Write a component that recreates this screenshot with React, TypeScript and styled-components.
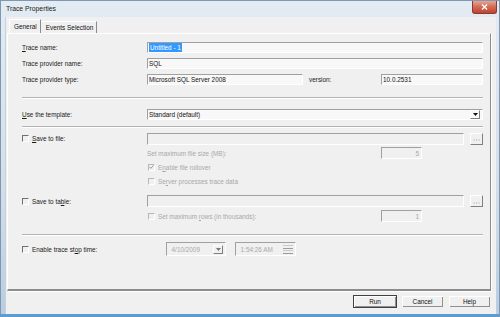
import React from 'react'
import styled, { createGlobalStyle } from 'styled-components'

const DISABLED = '#a8a8a8'
const SHADOW = '#a0a0a0'

const GlobalStyle = createGlobalStyle`
  html, body {
    margin: 0;
    padding: 0;
    width: 500px;
    height: 317px;
    overflow: hidden;
    background: #ffffff;
  }
  * {
    box-sizing: border-box;
  }
`

const Window = styled.div`
  width: 500px;
  height: 317px;
  display: flex;
  flex-direction: column;
  background: linear-gradient(180deg, #e3ebf3 0%, #d4dee9 60%, #b9cde2 100%);
  border: 1px solid #7f97b0;
  border-bottom: 3px solid #5e9cd0;
  font-family: 'Liberation Sans', Arial, sans-serif;
  font-size: 6.4px;
  color: #1a1a1a;
`

const TitleBar = styled.div`
  height: 16px;
  display: flex;
  align-items: flex-start;
  justify-content: space-between;
  padding-left: 5px;
`

const Title = styled.div`
  padding-top: 4px;
  font-size: 6.8px;
  color: #222;
`

const CloseButton = styled.div`
  width: 25px;
  height: 13px;
  margin-right: 2px;
  border: 1px solid #8a3a34;
  border-top: none;
  border-radius: 0 0 3px 3px;
  background: linear-gradient(180deg, #e8a493 0%, #d36a55 50%, #c0442c 100%);
  display: flex;
  align-items: center;
  justify-content: center;
`

const Client = styled.div`
  flex: 1;
  display: flex;
  flex-direction: column;
  margin: 0 3px 0 4px;
  background: #f0f0f0;
  border-left: 1px solid #c5d2de;
`

const TabStrip = styled.div`
  height: 16px;
  display: flex;
  align-items: flex-end;
  padding-left: 3px;
`

const Tab = styled.div<{ $active?: boolean }>`
  height: ${(p) => (p.$active ? 14 : 12)}px;
  padding: 0 3px 0 4px;
  display: flex;
  align-items: center;
  border-left: 1px solid ${(p) => (p.$active ? '#ffffff' : 'transparent')};
  border-top: 1px solid #ffffff;
  border-right: 1px solid #8c8c8c;
  color: #111;
`

const Panel = styled.div`
  height: 258px;
  margin: 0 5px 0 1px;
  display: flex;
  flex-direction: column;
  padding: 5px 7px 0 14px;
  border-top: 1px solid #ffffff;
  border-left: 1px solid #ffffff;
  border-right: 1px solid #8c8c8c;
  border-bottom: 2px solid #8c8c8c;
  box-shadow: 1px 1px 0 #ffffff;
`

const Row = styled.div<{ $h: number; $mt?: number }>`
  height: ${(p) => p.$h}px;
  margin-top: ${(p) => p.$mt ?? 0}px;
  display: grid;
  grid-template-columns: 125px 1fr;
  align-items: center;
`

const Label = styled.div<{ $disabled?: boolean; $w?: number }>`
  display: flex;
  align-items: center;
  white-space: nowrap;
  ${(p) => (p.$w ? `width: ${p.$w}px; flex: none;` : '')}
  color: ${(p) => (p.$disabled ? DISABLED : '#1a1a1a')};
`

const Text = styled.span`
  white-space: pre;
`

const Field = styled.div<{ $indent?: number }>`
  display: flex;
  align-items: center;
  padding-left: ${(p) => p.$indent ?? 0}px;
`

const Input = styled.div<{ $w?: number; $h?: number; $disabled?: boolean; $align?: 'left' | 'right' }>`
  height: ${(p) => p.$h ?? (p.$disabled ? 12 : 11)}px;
  ${(p) => (p.$w ? `width: ${p.$w}px; flex: none;` : 'flex: 1;')}
  display: flex;
  align-items: center;
  justify-content: ${(p) => (p.$align === 'right' ? 'flex-end' : 'flex-start')};
  padding: 0 2px 0 1px;
  background: ${(p) => (p.$disabled ? '#f0f0f0' : '#f8f8f8')};
  border-top: 1px solid ${SHADOW};
  border-left: 1px solid ${SHADOW};
  border-right: 1px solid #ffffff;
  border-bottom: 1px solid #ffffff;
  color: ${(p) => (p.$disabled ? DISABLED : '#111')};
  white-space: pre;
  overflow: hidden;
`

const Selected = styled.span`
  background: #3399ff;
  color: #ffffff;
  padding: 0 1px;
  line-height: 9px;
`

const VersionLabel = styled.div`
  width: 78px;
  padding-left: 6px;
  flex: none;
`

const Separator = styled.div<{ $mt: number; $mb: number }>`
  height: 2px;
  margin: ${(p) => p.$mt}px 0 ${(p) => p.$mb}px;
  border-top: 1px solid #b4b4b4;
  border-bottom: 1px solid #ffffff;
`

const Box = styled.span<{ $disabled?: boolean }>`
  width: 7px;
  height: 7px;
  flex: none;
  margin-right: 3px;
  border-top: 1px solid ${(p) => (p.$disabled ? '#b8b8b8' : '#707070')};
  border-left: 1px solid ${(p) => (p.$disabled ? '#b8b8b8' : '#707070')};
  border-right: 1px solid #ffffff;
  border-bottom: 1px solid #ffffff;
  display: flex;
  align-items: center;
  justify-content: center;
`

const SmallButton = styled.div`
  width: 13px;
  height: 12px;
  flex: none;
  margin-left: 6px;
  border-top: 1px solid #ffffff;
  border-left: 1px solid #ffffff;
  border-right: 1px solid #808080;
  border-bottom: 1px solid #808080;
  display: flex;
  align-items: center;
  justify-content: center;
`

const ArrowBox = styled.div`
  width: 10px;
  height: 9px;
  flex: none;
  margin-left: auto;
  border-top: 1px solid #ffffff;
  border-left: 1px solid #ffffff;
  border-right: 1px solid #808080;
  border-bottom: 1px solid #808080;
  display: flex;
  align-items: center;
  justify-content: center;
`

const Spin = styled.div`
  width: 10px;
  height: 10px;
  flex: none;
  margin-left: auto;
  display: flex;
  flex-direction: column;
  justify-content: center;
  gap: 1px;
`

const SpinHalf = styled.div`
  height: 4px;
  border-top: 1px solid #c8c8c8;
  border-bottom: 1px solid #9c9c9c;
`

const Spacer = styled.div<{ $w: number }>`
  width: ${(p) => p.$w}px;
  flex: none;
`

const Footer = styled.div`
  flex: 1;
  display: flex;
  justify-content: flex-end;
  align-items: flex-start;
  gap: 4px;
  padding: 4px 5px 0 0;
`

const Button = styled.div<{ $default?: boolean }>`
  width: ${(p) => (p.$default ? 44 : 43)}px;
  height: 13px;
  display: flex;
  align-items: center;
  justify-content: center;
  background: #f0f0f0;
  border: 1px solid ${(p) => (p.$default ? '#404040' : 'transparent')};
  box-shadow: inset 1px 1px 0 #ffffff, inset -1px -1px 0 #909090;
  color: #111;
`

const U = styled.span`
  text-decoration: underline;
`

const Arrow = ({ color = '#111' }: { color?: string }) => (
  <svg width="5" height="3" viewBox="0 0 5 3">
    <path d="M0 0 H5 L2.5 3 Z" fill={color} />
  </svg>
)

const Check = () => (
  <svg width="6" height="6" viewBox="0 0 6 6">
    <path d="M0.5 2.8 L2.2 4.6 L5.5 1" stroke="#9a9a9a" strokeWidth="1.2" fill="none" />
  </svg>
)

const Ellipsis = () => (
  <svg width="7" height="5" viewBox="0 0 7 5">
    <path d="M0.5 4 H1.5 M3 4 H4 M5.5 4 H6.5" stroke="#a0a0a0" strokeWidth="1" />
  </svg>
)

export default function App() {
  return (
    <>
      <GlobalStyle />
      <Window>
        <TitleBar>
          <Title>Trace Properties</Title>
          <CloseButton>
            <svg width="7" height="6" viewBox="0 0 7 6">
              <path d="M1 0.5 L6 5.5 M6 0.5 L1 5.5" stroke="#ffffff" strokeWidth="1.4" />
            </svg>
          </CloseButton>
        </TitleBar>
        <Client>
          <TabStrip>
            <Tab $active>General</Tab>
            <Tab>Events Selection</Tab>
          </TabStrip>
          <Panel>
            <Row $h={16}>
              <Label>
                <Text>
                  <U>T</U>race name:
                </Text>
              </Label>
              <Input>
                <Selected>Untitled - 1</Selected>
              </Input>
            </Row>
            <Row $h={16}>
              <Label>Trace provider name:</Label>
              <Input>SQL</Input>
            </Row>
            <Row $h={17}>
              <Label>Trace provider type:</Label>
              <Field>
                <Input $w={156}>Microsoft SQL Server 2008</Input>
                <VersionLabel>version:</VersionLabel>
                <Input>10.0.2531</Input>
              </Field>
            </Row>
            <Separator $mt={9} $mb={8} />
            <Row $h={14}>
              <Label>
                <Text>
                  <U>U</U>se the template:
                </Text>
              </Label>
              <Input>
                Standard (default)
                <ArrowBox>
                  <Arrow />
                </ArrowBox>
              </Input>
            </Row>
            <Separator $mt={5} $mb={3} />
            <Row $h={15}>
              <Label>
                <Box />
                <Text>
                  <U>S</U>ave to file:
                </Text>
              </Label>
              <Field>
                <Input $disabled />
                <SmallButton>
                  <Ellipsis />
                </SmallButton>
              </Field>
            </Row>
            <Row $h={14}>
              <Label />
              <Field>
                <Label $disabled $w={234}>
                  Set maximum file size (MB):
                </Label>
                <Input $w={41} $disabled $align="right">
                  5
                </Input>
              </Field>
            </Row>
            <Row $h={14}>
              <Label />
              <Field $indent={1}>
                <Label $disabled>
                  <Box $disabled>
                    <Check />
                  </Box>
                  <Text>
                    E<U>n</U>able file rollover
                  </Text>
                </Label>
              </Field>
            </Row>
            <Row $h={14}>
              <Label />
              <Field $indent={1}>
                <Label $disabled>
                  <Box $disabled />
                  <Text>
                    Se<U>r</U>ver processes trace data
                  </Text>
                </Label>
              </Field>
            </Row>
            <Row $h={14} $mt={6}>
              <Label>
                <Box />
                <Text>
                  Save to ta<U>b</U>le:
                </Text>
              </Label>
              <Field>
                <Input $disabled />
                <SmallButton>
                  <Ellipsis />
                </SmallButton>
              </Field>
            </Row>
            <Row $h={16}>
              <Label />
              <Field $indent={1}>
                <Label $disabled $w={233}>
                  <Box $disabled />
                  <Text>
                    Set maximum <U>r</U>ows (in thousands):
                  </Text>
                </Label>
                <Input $w={41} $disabled $align="right">
                  1
                </Input>
              </Field>
            </Row>
            <Separator $mt={10} $mb={5} />
            <Row $h={16}>
              <Label>
                <Box />
                <Text>
                  Enable trace st<U>o</U>p time:
                </Text>
              </Label>
              <Field $indent={19}>
                <Input $w={60} $h={14} $disabled>
                  {'  4/10/2009'}
                  <ArrowBox>
                    <Arrow color="#777" />
                  </ArrowBox>
                </Input>
                <Spacer $w={9} />
                <Input $w={61} $h={14} $disabled>
                  {'  1:54:26 AM'}
                  <Spin>
                    <SpinHalf />
                    <SpinHalf />
                  </Spin>
                </Input>
              </Field>
            </Row>
          </Panel>
          <Footer>
            <Button $default>Run</Button>
            <Button>Cancel</Button>
            <Button>Help</Button>
          </Footer>
        </Client>
      </Window>
    </>
  )
}
